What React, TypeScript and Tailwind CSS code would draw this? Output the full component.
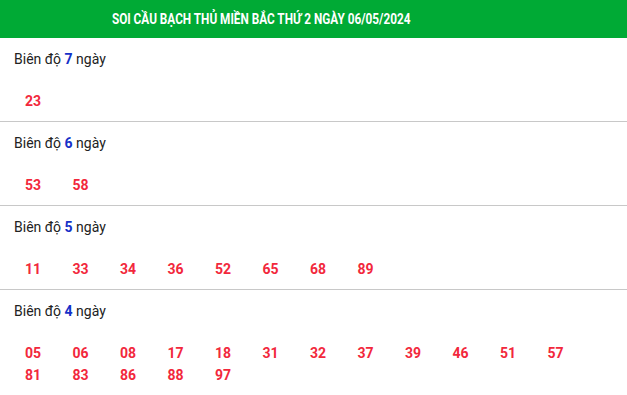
import React from 'react';

const groups = [
  { days: 7, nums: ['23'] },
  { days: 6, nums: ['53', '58'] },
  { days: 5, nums: ['11', '33', '34', '36', '52', '65', '68', '89'] },
  {
    days: 4,
    nums: ['05', '06', '08', '17', '18', '31', '32', '37', '39', '46', '51', '57', '81', '83', '86', '88', '97'],
  },
];

export default function App() {
  return (
    <div className="w-[627px] bg-white font-['Roboto',sans-serif] text-[14px] text-[#222]">
      <div className="flex h-[38px] items-center justify-center bg-[#00aa35] pr-[105px]">
        <h2 className="inline-block scale-x-[0.785] font-['Roboto',sans-serif] text-[15px] font-bold whitespace-nowrap text-white">
          SOI CẦU BẠCH THỦ MIỀN BẮC THỨ 2 NGÀY 06/05/2024
        </h2>
      </div>

      {groups.map((g, i) => (
        <div key={g.days} className={`pt-[11px] pb-[9px] ${i < groups.length - 1 ? 'border-b border-[#c8c8c8]' : ''}`}>
          <div className="pl-[14px] leading-[20px]">
            Biên độ <span className="font-bold text-[#1530c8]">{g.days}</span> ngày
          </div>
          <div className="mt-[21px] flex flex-wrap pl-[25px]">
            {g.nums.map((n) => (
              <span key={n} className="w-[47.5px] leading-[22px] font-bold text-[#f2283c]">
                {n}
              </span>
            ))}
          </div>
        </div>
      ))}
    </div>
  );
}
